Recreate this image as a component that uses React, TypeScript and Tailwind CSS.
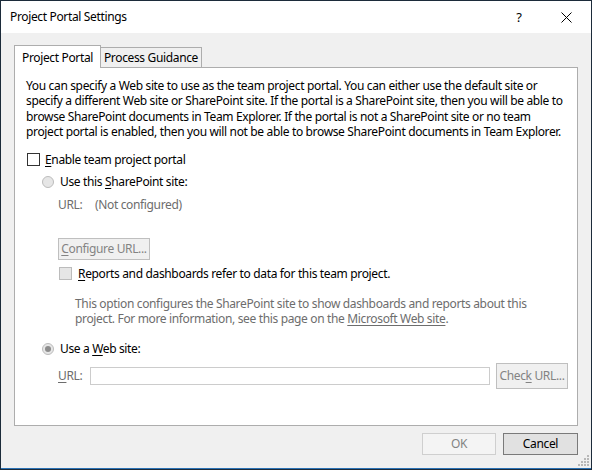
import React from "react";

const U = ({ children }: { children: React.ReactNode }) => (
  <span className="underline underline-offset-2 decoration-1">{children}</span>
);

function Grip() {
  const dots: [number, number][] = [];
  for (let r = 0; r < 4; r++) {
    for (let c = 0; c <= r; c++) {
      dots.push([9 - c * 3, r * 3]);
    }
  }
  return (
    <svg width="12" height="12" viewBox="0 0 12 12" className="absolute right-[1px] bottom-[1px]">
      {dots.map(([x, y], i) => (
        <rect key={i} x={x} y={y} width="2" height="2" fill="#b8b8b8" />
      ))}
    </svg>
  );
}

export default function App() {
  return (
    <div
      className="w-[592px] h-[470px] bg-[#1c2b3a] p-[1px] text-[12px] text-black tracking-[-0.35px] whitespace-nowrap"
      style={{ fontFamily: '"Segoe UI", "Noto Sans", "Open Sans", sans-serif' }}
    >
      <div className="relative w-full h-full flex flex-col bg-[#f0f0f0] border-b border-[#2a72b5]">
        {/* Title bar */}
        <div className="h-[32px] bg-white flex items-center pl-[9px] shrink-0">
          <span className="flex-1 leading-none">Project Portal Settings</span>
          <span className="w-[12px] text-center leading-none mr-[36px] text-[13px]">?</span>
          <svg width="11" height="11" viewBox="0 0 11 11" className="mr-[19px]">
            <path d="M0.5 0.5 L10.5 10.5 M10.5 0.5 L0.5 10.5" stroke="#000" strokeWidth="1" />
          </svg>
        </div>

        {/* Body */}
        <div className="flex-1 flex flex-col pl-[13px] pr-[13px] pt-[12px]">
          {/* Tabs */}
          <div className="flex items-end h-[22px] relative z-10">
            <div className="w-[87px] h-[23px] bg-white border-l border-t border-r border-[#adadad] flex items-start justify-center pt-[3px] -mb-[1px]">
              Project Portal
            </div>
            <div className="w-[101px] h-[20px] bg-[#f0f0f0] border-t border-r border-[#adadad] flex items-center justify-center">
              Process Guidance
            </div>
          </div>

          {/* Panel */}
          <div className="h-[359px] bg-white border border-[#adadad] pl-[11px] pt-[10px] flex flex-col">
            <div className="leading-[15.4px]">
              <div>You can specify a Web site to use as the team project portal. You can either use the default site or</div>
              <div>specify a different Web site or SharePoint site. If the portal is a SharePoint site, then you will be able to</div>
              <div>browse SharePoint documents in Team Explorer. If the portal is not a SharePoint site or no team</div>
              <div>project portal is enabled, then you will not be able to browse SharePoint documents in Team Explorer.</div>
            </div>

            {/* Enable checkbox */}
            <div className="mt-[12px] h-[16px] flex items-center ml-[1px]">
              <div className="w-[13px] h-[13px] border border-[#333333] bg-white" />
              <span className="ml-[5px] leading-none"><U>E</U>nable team project portal</span>
            </div>

            {/* SharePoint radio */}
            <div className="mt-[6px] h-[16px] flex items-center ml-[16px]">
              <div className="w-[12px] h-[12px] rounded-full border border-[#bcbcbc] bg-[#e6e6e6]" />
              <span className="ml-[6px] leading-none">Use this <U>S</U>harePoint site:</span>
            </div>

            {/* URL not configured */}
            <div className="mt-[7px] h-[16px] flex items-center ml-[32px] text-[#6d6d6d]">
              <span className="w-[37px] leading-none">URL:</span>
              <span className="leading-none">(Not configured)</span>
            </div>

            {/* Configure button */}
            <div className="mt-[25px] ml-[32px]">
              <div className="w-[92px] h-[22px] border border-[#bfbfbf] bg-[#f0f0f0] text-[#838383] flex items-center justify-center">
                <span><U>C</U>onfigure URL...</span>
              </div>
            </div>

            {/* Reports checkbox */}
            <div className="mt-[6px] h-[16px] flex items-center ml-[33px]">
              <div className="w-[13px] h-[13px] border border-[#bcbcbc] bg-[#e6e6e6]" />
              <span className="ml-[6px] leading-none"><U>R</U>eports and dashboards refer to data for this team project.</span>
            </div>

            {/* Description */}
            <div className="mt-[14px] ml-[49px] leading-[15.4px] text-[#6d6d6d]">
              <div>This option configures the SharePoint site to show dashboards and reports about this</div>
              <div>
                project. For more information, see this page on the <U>Microsoft Web site</U>.
              </div>
            </div>

            {/* Web radio */}
            <div className="mt-[15px] h-[16px] flex items-center ml-[16px]">
              <div className="w-[12px] h-[12px] rounded-full border border-[#bcbcbc] bg-[#e6e6e6] flex items-center justify-center">
                <div className="w-[6px] h-[6px] rounded-full bg-[#8c8c8c]" />
              </div>
              <span className="ml-[6px] leading-none">Use a <U>W</U>eb site:</span>
            </div>

            {/* URL input row */}
            <div className="mt-[6px] h-[26px] flex items-center ml-[32px]">
              <span className="w-[32px] leading-none text-[#6d6d6d]"><U>U</U>RL:</span>
              <div className="w-[400px] h-[18px] border border-[#cccccc] bg-white" />
              <div className="ml-[6px] w-[72px] h-[26px] border border-[#bfbfbf] bg-[#f0f0f0] text-[#838383] flex items-center justify-center">
                <span>Chec<U>k</U> URL...</span>
              </div>
            </div>
          </div>

          {/* Bottom buttons */}
          <div className="mt-[7px] flex justify-end gap-[7px]">
            <div className="w-[74px] h-[22px] border border-[#cfcfcf] bg-[#f4f4f4] text-[#838383] flex items-center justify-center">
              OK
            </div>
            <div className="w-[75px] h-[22px] border border-[#7a7a7a] bg-[#e1e1e1] flex items-center justify-center">
              Cancel
            </div>
          </div>
        </div>
        <Grip />
      </div>
    </div>
  );
}
